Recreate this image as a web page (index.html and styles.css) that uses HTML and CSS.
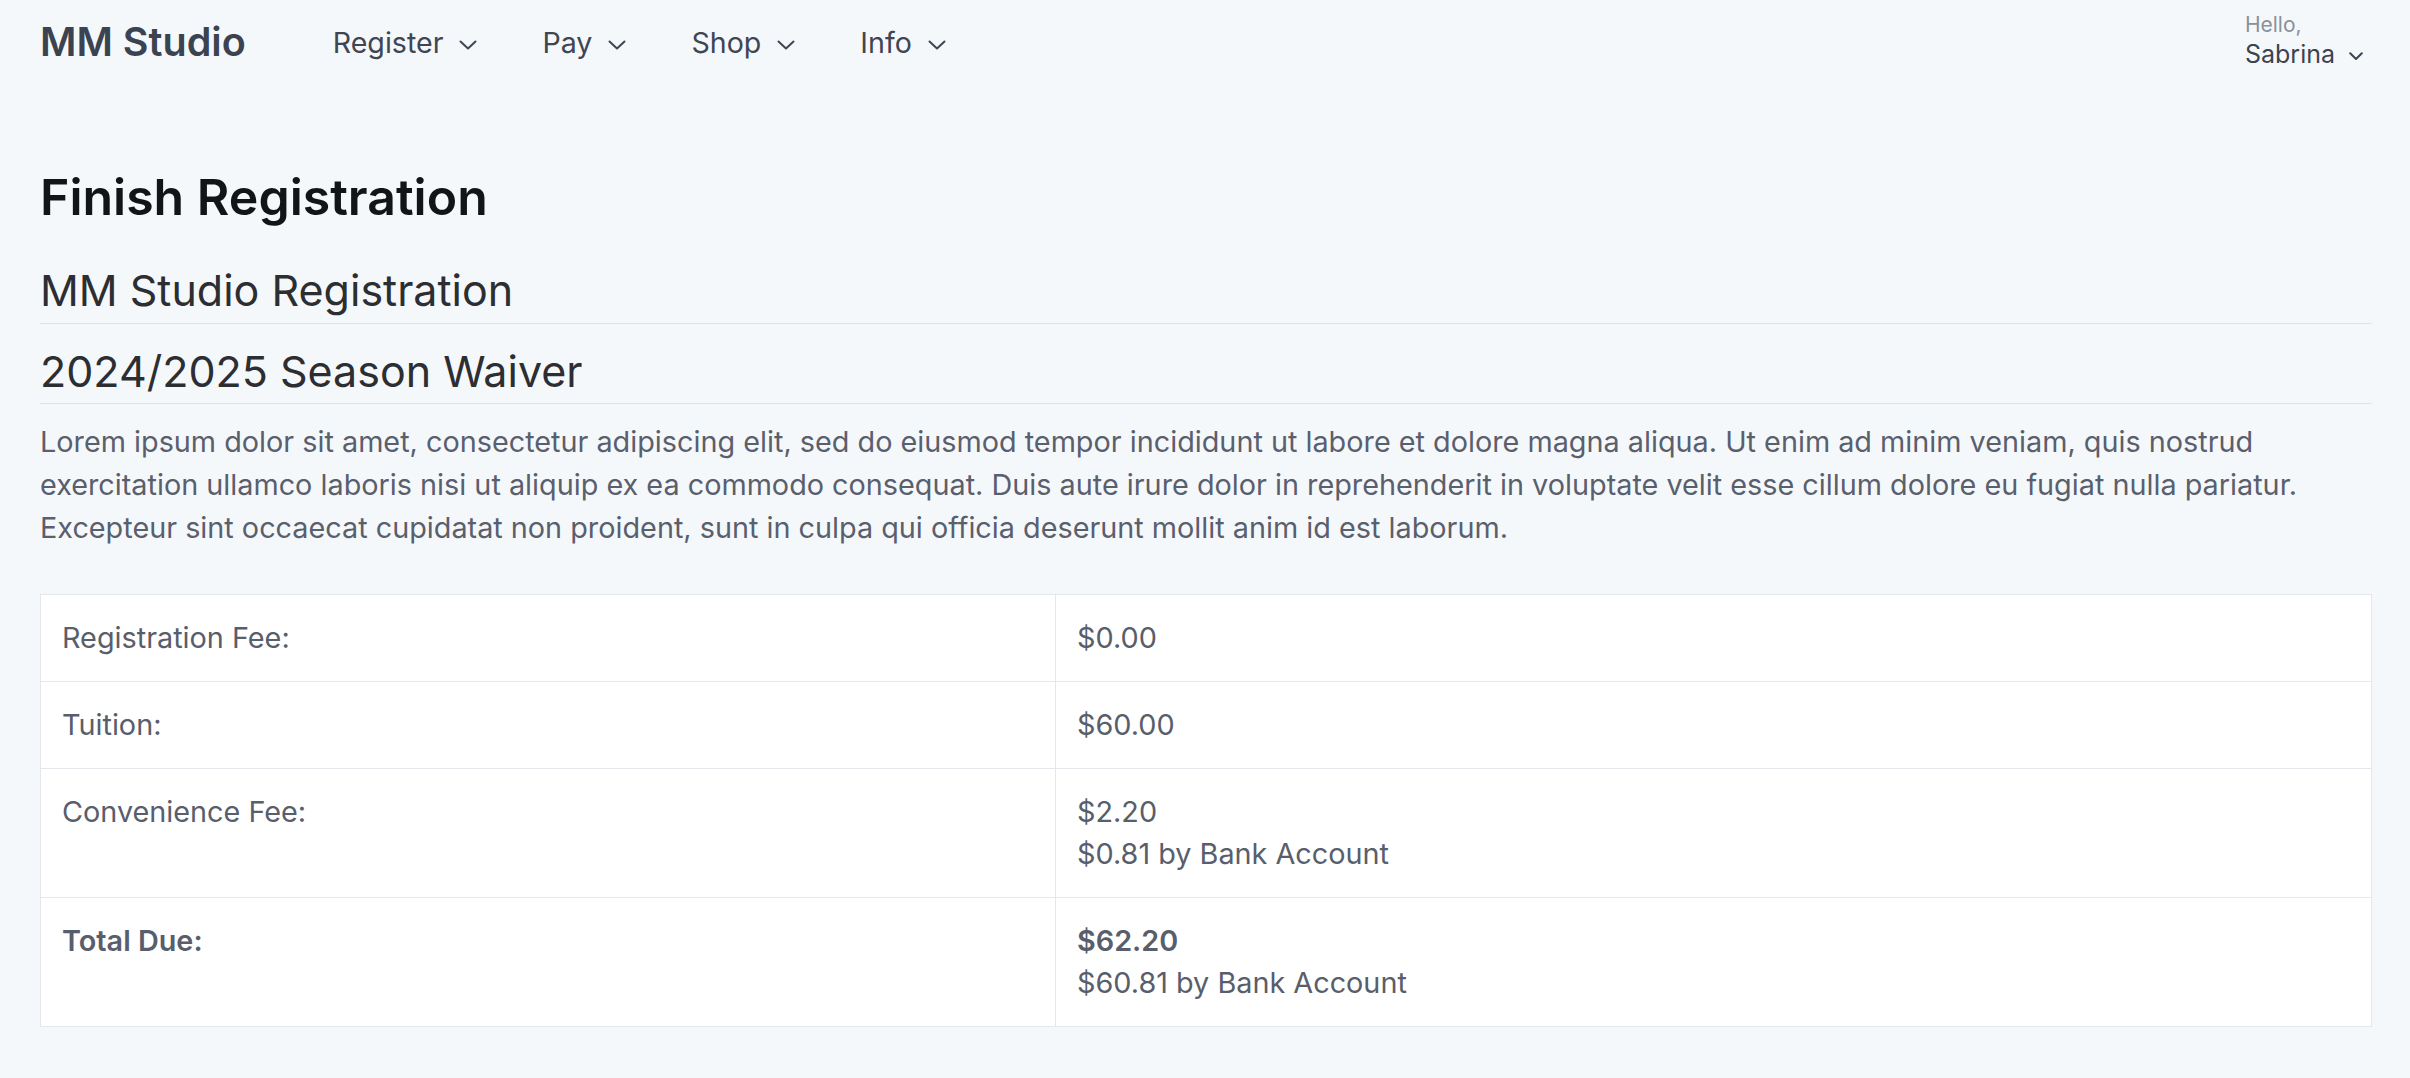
FILE: index.html
```html
<!DOCTYPE html>
<html>
	<head>
	<meta charset="utf-8">
	<title>Finish Registration - MM Studio</title>
	<link rel="stylesheet" href="styles.css">
	</head>
	<body>
		<div class="topbar">
			<a class="brand" href="#">MM Studio</a>
			<ul class="menu">
				<li><a href="#">Register</a><svg class="caret" viewBox="0 0 18 10"><polyline points="1.5,1.5 9,8.5 16.5,1.5"/></svg></li>
				<li><a href="#">Pay</a><svg class="caret" viewBox="0 0 18 10"><polyline points="1.5,1.5 9,8.5 16.5,1.5"/></svg></li>
				<li><a href="#">Shop</a><svg class="caret" viewBox="0 0 18 10"><polyline points="1.5,1.5 9,8.5 16.5,1.5"/></svg></li>
				<li><a href="#">Info</a><svg class="caret" viewBox="0 0 18 10"><polyline points="1.5,1.5 9,8.5 16.5,1.5"/></svg></li>
			</ul>
			<div class="user">
				<span class="hello">Hello,</span>
				<span class="name">Sabrina<svg class="caret small" viewBox="0 0 14 9"><polyline points="1.2,1.2 7,7 12.8,1.2"/></svg></span>
			</div>
		</div>

		<div class="page">
			<h1>Finish Registration</h1>
			<h2>MM Studio Registration</h2>
			<h2>2024/2025 Season Waiver</h2>
			<p class="waiver">Lorem ipsum dolor sit amet, consectetur adipiscing elit, sed do eiusmod tempor incididunt ut labore et dolore magna aliqua. Ut enim ad minim veniam, quis nostrud exercitation ullamco laboris nisi ut aliquip ex ea commodo consequat. Duis aute irure dolor in reprehenderit in voluptate velit esse cillum dolore eu fugiat nulla pariatur. Excepteur sint occaecat cupidatat non proident, sunt in culpa qui officia deserunt mollit anim id est laborum.</p>

			<table class="fees">
				<colgroup>
					<col class="label-col">
					<col>
				</colgroup>
				<tr>
					<td>Registration Fee:</td>
					<td>$0.00</td>
				</tr>
				<tr>
					<td>Tuition:</td>
					<td>$60.00</td>
				</tr>
				<tr>
					<td>Convenience Fee:</td>
					<td>$2.20<br>$0.81 by Bank Account</td>
				</tr>
				<tr class="total">
					<td><strong>Total Due:</strong></td>
					<td><strong>$62.20</strong><br>$60.81 by Bank Account</td>
				</tr>
			</table>
		</div>
	</body>
</html>
```

FILE: styles.css
```css
	html, body {
		margin: 0px;
		background: #f5f8fb;
		font-family: Inter, "Noto Sans", sans-serif;
		color: #5a5f6d;
	}

	a {
		color: inherit;
		text-decoration: none;
	}

	/* top navigation */
	div.topbar {
		display: flex;
		align-items: center;
		height: 86px;
		padding: 0 47px 0 40px;
	}

	a.brand {
		font-size: 39.5px;
		font-weight: 600;
		line-height: 1.2;
		color: #3c4350;
	}

	ul.menu {
		display: flex;
		gap: 65px;
		margin: 0 0 0 87px;
		padding: 0;
		list-style: none;
		flex: 1;
	}

	ul.menu li {
		display: flex;
		align-items: center;
		gap: 16px;
		font-size: 28.6px;
		line-height: 1.2;
		color: #3f4552;
	}

	svg.caret {
		width: 18px;
		height: 10px;
		margin-top: 3px;
		fill: none;
		stroke: currentColor;
		stroke-width: 2;
		stroke-linecap: round;
		stroke-linejoin: round;
	}

	svg.caret.small {
		width: 14px;
		height: 9px;
		margin-top: 4px;
	}

	div.user {
		display: flex;
		flex-direction: column;
		align-self: flex-start;
		padding-top: 11px;
	}

	span.hello {
		font-size: 21px;
		line-height: 28px;
		color: #8b9099;
	}

	span.name {
		display: flex;
		align-items: center;
		gap: 14px;
		font-size: 25px;
		line-height: 30px;
		color: #3c4350;
	}

	/* page body */
	div.page {
		padding: 81px 38px 40px 40px;
	}

	h1 {
		margin: 0 0 37px 0;
		font-size: 50px;
		font-weight: 600;
		line-height: 1.22;
		color: #121418;
	}

	h2 {
		margin: 0 0 22px 0;
		padding-bottom: 6px;
		border-bottom: 1px solid #dfe3e8;
		font-size: 43px;
		font-weight: 400;
		line-height: 1.2;
		color: #2c2e32;
	}

	p.waiver {
		margin: -6px 0 45px 0;
		font-size: 28.8px;
		line-height: 43px;
	}

	table.fees {
		width: 100%;
		border-collapse: collapse;
		background: #fff;
		border: 1px solid #e4e7eb;
		font-size: 28.8px;
		line-height: 42px;
		color: #585e6b;
	}

	col.label-col {
		width: 1015px;
	}

	table.fees td {
		padding: 22px 21px;
		border: 1px solid #e4e7eb;
		vertical-align: top;
		text-align: left;
	}

	table.fees strong {
		font-weight: 600;
	}
```
